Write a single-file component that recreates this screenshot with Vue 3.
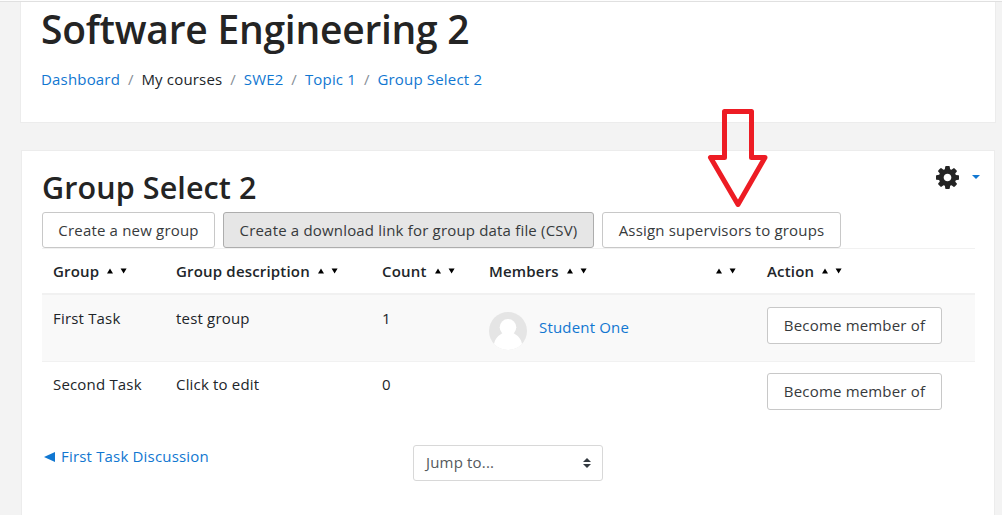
<script setup>
const crumbs = [
  { text: 'Dashboard', link: true },
  { text: 'My courses', link: false },
  { text: 'SWE2', link: true },
  { text: 'Topic 1', link: true },
  { text: 'Group Select 2', link: true },
]
const heads = ['Group', 'Group description', 'Count', 'Members', '', 'Action']
const rows = [
  { group: 'First Task', description: 'test group', count: 1, member: 'Student One' },
  { group: 'Second Task', description: 'Click to edit', count: 0, member: '' },
]
</script>

<template>
  <div class="page">
    <header class="card top">
      <h1>Software Engineering 2</h1>
      <nav class="crumbs">
        <template v-for="(c, i) in crumbs" :key="c.text">
          <span v-if="i" class="sep">/</span>
          <a v-if="c.link">{{ c.text }}</a>
          <span v-else>{{ c.text }}</span>
        </template>
      </nav>
    </header>

    <main class="card main">
      <div class="titlebar">
        <h2>Group Select 2</h2>
        <div class="settings">
          <svg class="gear" viewBox="0 128 1536 1536">
            <path d="M1024 896q0-106-75-181t-181-75-181 75-75 181 75 181 181 75 181-75 75-181zm512-109v222q0 12-8 23t-20 13l-185 28q-19 54-39 91 35 50 107 138 10 12 10 25t-9 23q-27 37-99 108t-94 71q-12 0-26-9l-138-108q-44 23-91 38-16 136-29 186-7 28-36 28h-222q-14 0-24.500-8.500t-11.500-21.500l-28-184q-49-16-90-37l-141 107q-10 9-25 9-14 0-25-11-126-114-165-168-7-10-7-23 0-12 8-23 15-21 51-66.500t54-70.500q-27-50-41-99l-183-27q-13-2-21-12.500t-8-23.500v-222q0-12 8-23t19-13l186-28q14-46 39-92-40-57-107-138-10-12-10-24 0-10 9-23 26-36 98.500-107.500t94.500-71.500q13 0 26 10l138 107q44-23 91-38 16-136 29-186 7-28 36-28h222q14 0 24.500 8.500t11.500 21.500l28 184q49 16 90 37l142-107q9-9 24-9 13 0 25 10 129 119 165 170 7 8 7 22 0 12-8 23-15 21-51 66.500t-54 70.500q26 50 41 98l183 28q13 2 21 12.500t8 23.500z" />
          </svg>
          <svg class="caret" viewBox="0 0 8 4"><path d="M0 0h8L4 4z" /></svg>
        </div>
      </div>
      <div class="actions">
        <button class="create">Create a new group</button>
        <button class="csv">Create a download link for group data file (CSV)</button>
        <button class="assign">Assign supervisors to groups</button>
      </div>

      <div class="table">
        <div class="row head">
          <div v-for="(h, i) in heads" :key="i" class="cell">
            <span v-if="h">{{ h }}</span>
            <svg class="sort" viewBox="0 0 20 6"><path d="M0 5.500h6L3 .5zM13.600.5h6l-3 5z" /></svg>
          </div>
        </div>
        <div v-for="r in rows" :key="r.group" class="row body">
          <div class="cell">{{ r.group }}</div>
          <div class="cell">{{ r.description }}</div>
          <div class="cell">{{ r.count }}</div>
          <div class="cell member">
            <template v-if="r.member">
              <svg class="avatar" viewBox="0 0 38 38">
                <defs><clipPath id="disc"><circle cx="19" cy="19" r="19" /></clipPath></defs>
                <g clip-path="url(#disc)">
                  <rect width="38" height="38" fill="#e5e5e5" />
                  <circle cx="19" cy="15.300" r="8.300" fill="#fff" />
                  <path d="M14 21h10c4 2 8 5 9 11v6H5v-6c1-6 5-9 9-11z" fill="#fff" />
                </g>
              </svg>
              <a>{{ r.member }}</a>
            </template>
          </div>
          <div class="cell"></div>
          <div class="cell"><button class="become">Become member of</button></div>
        </div>
      </div>

      <footer class="foot">
        <a class="prev"><svg viewBox="0 0 11 10"><path d="M0 5L11 0v10z" /></svg>First Task Discussion</a>
        <div class="jump">
          <span>Jump to...</span>
          <svg viewBox="0 0 8 10"><path d="M0 4h8L4 0zM0 6h8l-4 4z" /></svg>
        </div>
      </footer>
    </main>

    <svg class="arrow" viewBox="0 0 64 102">
      <path d="M17.500 4.500H44.500v46H58L31 97.500 3.500 50.500h14z" />
    </svg>
  </div>
</template>

<style>
body {
  background: #f3f3f3;
}
</style>

<style scoped>
.page {
  position: relative;
  box-sizing: border-box;
  width: 1002px;
  height: 515px;
  overflow: hidden;
  padding: 1px 6px 0 20px;
  border-top: 1px solid #fdfdfd;
  box-shadow: inset 0 1px #e0e0e0;
  background: #f3f3f3;
  color: #212529;
  font: 15px/22px "Open Sans", sans-serif;
  letter-spacing: 0.18px;
}
.card {
  box-sizing: border-box;
  background: #fff;
  border: 1px solid #ececec;
}
.top {
  height: 121px;
  border-top: 0;
  padding: 4px 20px 0;
}
h1,
h2 {
  margin: 0;
  color: #242424;
  font-weight: 600;
  white-space: nowrap;
}
h1 {
  font-size: 39px;
  line-height: 46px;
  letter-spacing: -0.25px;
}
a {
  color: #1177d1;
}
.crumbs {
  display: flex;
  margin-top: 16px;
}
.sep {
  width: 21.400px;
  text-align: center;
  color: #868e96;
}
.main {
  height: 400px;
  margin: 27px 1px 0;
  padding: 14px 18px 0 20px;
}
.titlebar {
  display: flex;
  justify-content: space-between;
  height: 47px;
}
h2 {
  font-size: 30.500px;
  line-height: 44px;
  letter-spacing: 0.1px;
}
.settings {
  display: flex;
  align-items: center;
  gap: 13px;
  height: 24px;
  margin-right: -4px;
}
.gear {
  width: 23px;
  height: 23px;
  fill: #242424;
}
.caret {
  width: 8px;
  height: 4px;
  fill: #1177d1;
}
.actions {
  display: flex;
  gap: 8px;
}
button {
  box-sizing: border-box;
  height: 36px;
  padding: 0;
  border: 1px solid #c8c8c8;
  border-radius: 3px;
  background: #fff;
  color: #373a3c;
  font: inherit;
  letter-spacing: inherit;
  white-space: nowrap;
}
.create {
  width: 173px;
}
.csv {
  width: 371px;
  background: #e6e6e6;
  border-color: #adadad;
}
.assign {
  width: 239px;
}
.become {
  width: 175px;
  height: 37px;
  padding-bottom: 1px;
}
.table {
  width: 933px;
}
.row {
  display: grid;
  grid-template-columns: 123px 206px 107px 227px 51px 219px;
}
.cell {
  padding-left: 11px;
}
.head {
  height: 47px;
  box-sizing: border-box;
  border-top: 1px solid #f1f1f1;
  border-bottom: 2px solid #f1f1f1;
  font-weight: 600;
}
.head .cell {
  display: flex;
  align-items: center;
  gap: 8px;
}
.sort {
  width: 20px;
  height: 6px;
}
.body {
  height: 67px;
  box-sizing: border-box;
  padding-top: 11px;
}
.body:nth-child(2) {
  height: 67px;
  padding-top: 12px;
  background: #f9f9f9;
  border-bottom: 1px solid #f1f1f1;
}
.member {
  display: flex;
  gap: 12px;
}
.avatar {
  width: 38px;
  height: 38px;
  margin-top: 5px;
}
.member a {
  margin-top: 9px;
}
.foot {
  display: flex;
  margin-top: 16px;
}
.prev {
  width: 371px;
}
.prev svg {
  width: 11px;
  height: 10px;
  margin: 0 6px 0 2px;
  fill: #1177d1;
}
.jump {
  box-sizing: border-box;
  display: flex;
  align-items: center;
  justify-content: space-between;
  width: 190px;
  height: 36px;
  padding: 0 11px 0 12px;
  border: 1px solid #d8d8d8;
  border-radius: 3px;
  color: #55595c;
}
.jump span {
  padding-bottom: 2px;
}
.jump svg {
  width: 8px;
  height: 10px;
  fill: #343a40;
}
.arrow {
  position: absolute;
  left: 707px;
  top: 106px;
  width: 64px;
  height: 102px;
  fill: none;
  stroke: #ed1c24;
  stroke-width: 5;
  stroke-linejoin: round;
}
</style>
